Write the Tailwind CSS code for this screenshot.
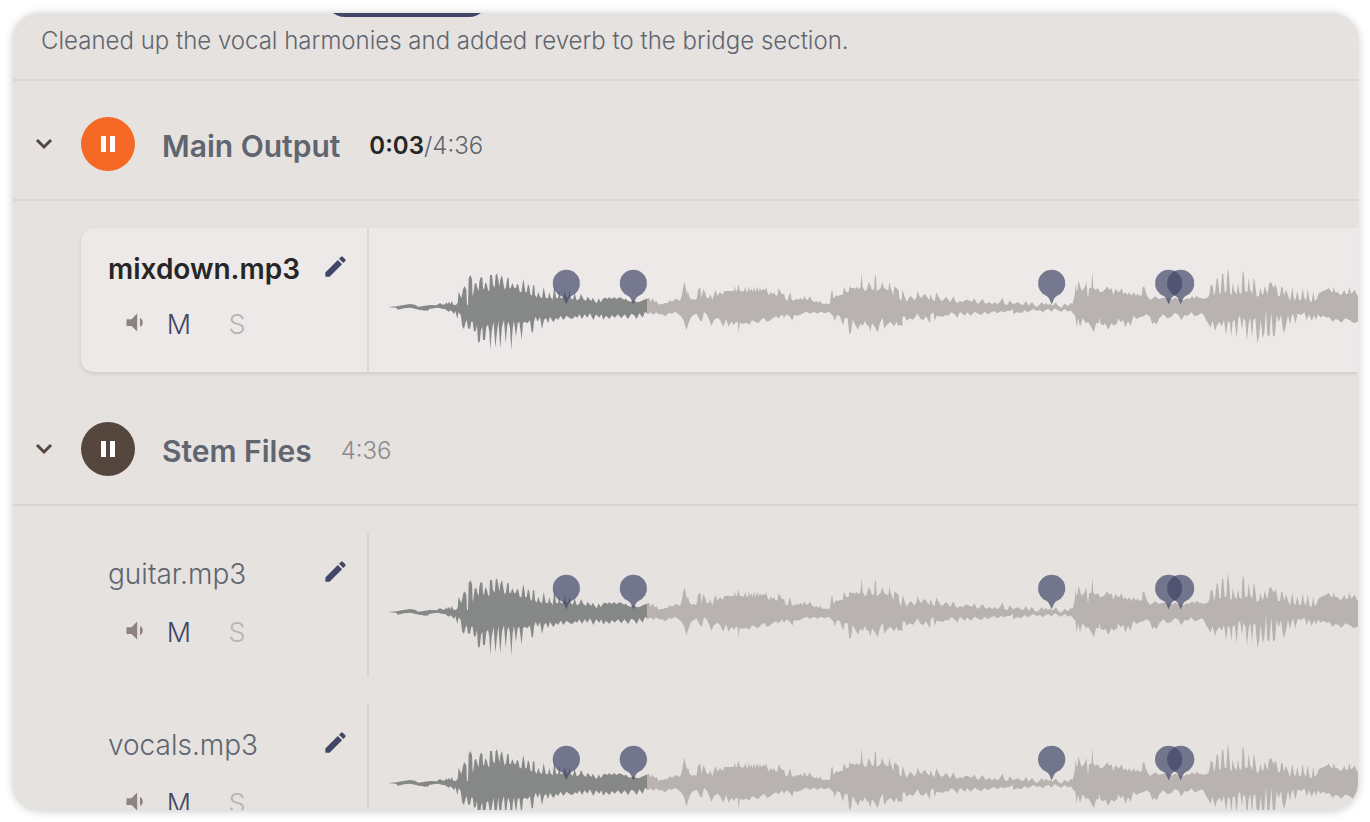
<!DOCTYPE html>
<html lang="en">
  <head>
    <meta charset="UTF-8" />
    <meta name="viewport" content="width=device-width, initial-scale=1" />
    <title>Stems player</title>
    <script src="https://cdn.jsdelivr.net/npm/@tailwindcss/browser@4"></script>
  </head>
  <body class="bg-white h-screen p-[13px] pr-3 pb-3 font-['Inter',sans-serif] font-light text-[#60656f]">
    <!-- shared shapes -->
    <svg class="absolute size-0" aria-hidden="true">
      <defs>
        <linearGradient id="progress" gradientUnits="userSpaceOnUse" x1="0" y1="0" x2="2934" y2="0">
          <stop offset="0.273" stop-color="#868888" />
          <stop offset="0.273" stop-color="#b8b3b0" />
        </linearGradient>
        <path id="wave" />
        <path id="pin" d="M0 44a41 41 0 0 1 14 79.500c-6 4-10 14-14 25c-4-11-8-21-14-25A41 41 0 0 1 0 44z" fill="#3e4567" fill-opacity="0.69" />
      </defs>
    </svg>

    <main class="h-full overflow-hidden rounded-[27px] bg-[#e5e2df] shadow-[0_1px_10px_rgba(0,0,0,0.22)]">
      <div class="border-b-2 border-[#d9d6d3] pb-[22px]">
        <button class="-mt-9 ml-[312px] block h-10 w-[164px] rounded-full bg-[#404667]" aria-label="Version"></button>
        <p class="pl-7 pt-2 text-2xl leading-8">Cleaned up the vocal harmonies and added reverb to the bridge section.</p>
      </div>

      <!-- main output -->
      <section>
        <header class="flex items-center border-b-2 border-[#d9d6d3] pt-9 pb-7 pl-[17px]">
          <button class="flex size-[27px] items-center justify-center" aria-label="Collapse Main Output">
            <svg class="size-[18px]" viewBox="0 0 18 18" fill="none" stroke="#54463d" stroke-width="3"><path d="M2 5l7 7 7-7" /></svg>
          </button>
          <button class="ml-6 flex size-[54px] items-center justify-center rounded-full bg-[#f66826]" aria-label="Pause Main Output">
            <svg class="h-4 w-[14px]" viewBox="0 0 14 16" fill="#fff"><path d="M0 0h5v16H0zM9 0h5v16H9z" /></svg>
          </button>
          <h2 class="ml-[27px] pt-1 text-[30px] leading-9 font-semibold">Main Output</h2>
          <p class="ml-[29px] pt-1 text-2xl leading-8"><span class="font-semibold text-[#262626]">0:03</span>/4:36</p>
        </header>
        <ul id="mainTracks" class="flex flex-col gap-[27px] pt-[27px] pb-[14px] pl-[68px]"></ul>
      </section>

      <!-- stems -->
      <section>
        <header class="flex items-center border-b-2 border-[#d9d6d3] pt-9 pb-7 pl-[17px]">
          <button class="flex size-[27px] items-center justify-center" aria-label="Collapse Stem Files">
            <svg class="size-[18px]" viewBox="0 0 18 18" fill="none" stroke="#54463d" stroke-width="3"><path d="M2 5l7 7 7-7" /></svg>
          </button>
          <button class="ml-6 flex size-[54px] items-center justify-center rounded-full bg-[#54463d]" aria-label="Pause Stem Files">
            <svg class="h-4 w-[14px]" viewBox="0 0 14 16" fill="#fff"><path d="M0 0h5v16H0zM9 0h5v16H9z" /></svg>
          </button>
          <h2 class="ml-[27px] pt-1 text-[30px] leading-9 font-semibold">Stem Files</h2>
          <p class="ml-[29px] pt-1 text-2xl leading-8 text-[#8b8b8d]">4:36</p>
        </header>
        <ul id="stemTracks" class="flex flex-col gap-[27px] pt-[27px] pb-[14px] pl-[68px]"></ul>
      </section>
    </main>

    <script>
      // peaks of the waveform: [x offset, points]
      const topPeaks = [
        [0, "28,156 50,154 70,150 90,147 105,149 115,155 130,153 150,150 170,151 180,144 188,149 195,148 200,142 203,148 207,140 212,148 215,137 220,149 228,150 233,143 236,110 241,122 244,130 250,100 254,94 259,104 261,150 264,150 266,70 271,60 276,72 278,125 281,110 284,86 289,84 292,98 296,108 298,80 302,66 307,68 309,98 312,105 316,82 320,88 325,108 328,105 330,60 336,60 339,90 344,98 347,60 351,55 355,75 358,95 361,72 366,60 370,85 374,104 378,95 382,68 386,70 388,98 392,100 397,84 403,100 408,98 411,86 415,90 419,110 424,112 427,90 430,72 433,90 436,112 440,112 444,86 448,95 451,118 456,122 459,90 463,92 465,120 470,128 475,110 480,125"],
        [480, "6,130 11,96 14,112 17,128 24,130 28,110 31,125 38,134 43,90 48,128 54,130 58,108 62,130 70,128 74,105 78,125 84,128 89,108 92,128 98,135 104,115 110,136 118,132 123,117 130,132 138,138 142,125 148,132 154,138 158,128 164,138 170,145 176,130 182,142 190,130 196,128 202,132 208,126 214,132 222,127 230,132 238,127 246,130 252,134 258,131 264,138 272,140 280,136 288,140 296,142 304,138 312,134 320,131 327,128 332,140 338,130 344,142 350,138 356,150 362,146 368,148 375,144 382,145 390,136 396,140 402,136 408,132 414,134 420,138 426,120 429,100 433,80 437,98 441,118 444,108 448,126 454,134 460,132 466,134 470,132 474,104 480,98"],
        [960, "1,100 5,130 10,102 15,112 20,128 26,130 31,118 37,136 42,118 47,105 52,122 60,112 66,118 70,118 72,108 98,108 102,108 104,92 108,110 112,104 115,88 119,106 126,110 132,108 136,95 139,110 144,108 146,94 150,110 154,100 158,112 162,95 166,112 172,96 176,112 180,98 184,108 190,102 196,105 199,96 202,112 208,122 212,108 216,118 222,112 226,120 232,122 236,100 242,110 246,118 252,116 256,132 262,138 268,118 271,112 275,134 280,137 290,132 296,134 302,128 308,136 314,122 318,134 324,134 329,124 336,136 344,142 350,138 356,145 360,136 364,144 372,148 378,145 384,148 390,145 394,110 397,106 400,130 404,128 408,120 414,124 420,120 428,120 432,95 437,108 442,112 446,110 449,92 453,100 460,98 464,102 470,96 476,102"],
        [1440, "1,98 3,80 5,52 8,95 14,108 20,105 26,82 30,88 36,105 42,102 45,60 48,64 50,108 56,104 62,98 67,80 72,98 80,104 85,106 88,80 92,98 100,120 103,94 110,100 116,106 118,130 124,138 128,104 134,125 140,140 146,130 152,122 158,130 164,136 170,125 172,108 178,122 184,130 190,120 196,118 202,128 208,134 212,118 218,134 224,138 229,112 234,122 238,128 243,138 250,135 258,126 264,132 270,142 276,132 280,124 286,138 292,144 300,138 308,142 314,136 322,134 330,138 336,140 343,130 350,144 356,146 362,138 368,132 374,144 380,146 388,140 396,148 404,142 412,148 420,140 428,128 434,148 442,150 450,136 458,148 466,145 474,142 482,148 490,150 498,138 506,152"],
        [1950, "6,140 14,152 20,155 26,152 32,145 36,142 42,150 48,143 54,150 60,146 66,152 72,148 78,142 84,152 94,158 104,146 114,154 122,144 128,146 134,120 137,86 140,110 143,100 145,76 150,92 155,108 160,102 165,95 168,80 171,98 173,125 175,125 177,100 184,98 187,50 190,98 196,104 204,100 210,112 218,110 226,102 232,94 238,104 245,100 250,120 256,102 262,108 268,112 275,100 280,118 286,112 292,120 298,112 304,122 312,112 318,124 322,115 328,122 336,120 338,95 343,95 347,112 353,125 360,135 368,130 376,124 386,132 394,130 402,128 415,130 425,134 435,128 450,134 462,136 470,130 478,132 486,124 494,130 500,122 506,128"],
        [2460, "6,130 14,132 18,128 24,128 28,118 32,90 38,92 42,122 46,108 50,70 54,72 58,115 62,116 66,55 70,58 74,110 79,110 83,38 87,62 91,120 95,118 98,84 103,108 110,118 114,84 118,112 124,118 128,46 132,58 135,108 142,112 146,68 150,102 157,118 161,68 165,84 170,125 177,122 181,98 186,118 190,118 194,92 198,104 202,118 208,84 214,82 218,94 222,98 225,88 230,98 234,124 240,122 244,94 248,98 252,122 258,104 263,118 270,138 277,98 282,130 286,136 292,108 297,134 303,135 308,98 312,125 318,138 323,102 329,138 335,142 340,108 344,138 350,132 356,115 362,112 370,108 378,105 386,98 392,108 398,112 401,96 406,112 414,112 420,120 426,118 433,104 438,118 444,116 448,96 453,116 458,112 464,104 470,118 474,124"],
      ];
      const bottomPeaks = [
        [0, "28,157 48,158 54,164 72,160 90,158 108,162 120,165 128,165 132,168 138,166 142,168 148,162 160,160 175,158 188,162 195,162 200,166 206,170 212,166 218,172 222,178 226,168 232,192 236,172 242,180 247,215 252,222 256,205 260,195 264,220 270,222 274,200 278,200 282,230 287,228 291,210 294,262 299,262 303,225 307,215 309,255 315,255 319,215 324,210 328,230 331,285 335,230 341,200 346,278 350,240 355,198 361,280 366,215 372,195 377,264 382,210 386,200 390,220 394,286 398,220 402,198 408,246 413,205 418,200 425,255 429,205 434,200 442,205 450,196 455,232 459,232 462,200 467,185 473,200 480,186"],
        [480, "6,222 12,195 18,188 24,205 30,185 40,202 48,188 54,195 62,182 70,195 80,182 90,190 97,192 105,184 112,188 118,178 126,192 134,178 142,188 150,175 160,195 168,178 178,188 184,178 190,194 198,182 208,192 216,180 224,188 234,178 244,190 254,178 264,192 274,176 282,180 290,192 298,175 308,188 315,170 324,178 332,172 340,180 348,172 356,178 366,178 376,184 386,174 396,176 406,170 416,178 424,185 432,198 439,226 446,204 452,188 460,180 470,176 478,192"],
        [960, "1,198 6,198 12,172 20,178 28,195 34,212 42,195 52,188 60,195 70,215 78,192 86,215 94,200 102,210 108,200 113,202 116,234 119,204 130,206 140,203 148,209 156,196 166,200 174,205 182,196 192,188 200,200 208,198 218,190 228,184 236,190 246,178 252,188 260,178 270,185 277,197 282,180 292,182 304,178 318,170 332,176 342,170 352,176 362,170 374,175 386,170 394,178 400,184 403,198 412,180 420,184 429,212 434,190 443,190 448,238 453,232 458,195 466,210 474,224"],
        [1440, "1,206 8,212 15,198 20,210 26,212 31,230 36,205 44,215 53,232 60,205 68,188 73,222 80,210 92,200 102,214 110,200 114,212 120,210 127,214 128,185 134,184 140,198 148,190 160,194 168,182 172,175 182,192 190,195 198,184 206,198 210,205 212,178 220,172 224,198 230,182 240,184 250,185 256,180 264,182 274,172 284,178 292,188 300,170 306,175 314,182 322,172 332,182 344,170 354,176 364,180 374,170 384,178 394,172 402,168 412,175 424,168 432,172 442,168 450,168 458,162 460,178 470,172 484,174 494,166 504,172"],
        [1950, "4,166 10,162 20,168 30,165 38,172 48,164 56,162 64,170 74,160 84,166 94,170 104,162 114,170 122,166 130,176 136,182 140,218 144,190 150,216 158,190 168,205 174,200 180,210 192,232 198,205 206,205 208,188 212,208 220,210 226,206 235,224 244,205 252,212 262,204 264,190 272,202 280,195 286,218 294,198 302,212 310,182 320,192 330,186 340,184 350,178 360,185 367,208 372,200 380,208 388,190 400,178 412,190 424,186 434,174 444,178 454,196 464,180 474,182 484,172 494,184 506,180"],
        [2460, "2,175 10,178 18,195 26,208 32,218 37,198 46,228 50,212 58,200 65,214 72,195 78,240 84,198 90,205 94,245 98,200 104,195 110,250 115,190 120,182 126,226 130,190 136,198 141,258 146,205 151,188 156,250 160,195 166,190 172,264 177,245 182,195 188,250 193,235 198,165 202,240 208,245 214,170 219,245 225,240 230,180 236,202 243,180 248,220 253,234 260,200 264,180 270,208 276,180 280,178 286,206 293,176 304,180 313,172 320,195 327,178 335,197 343,180 348,195 354,178 362,188 370,182 380,188 388,186 398,200 406,192 414,194 424,203 436,190 450,196 460,204 474,200"],
      ];

      // join the chunks in a list of [x, y]
      function toPoints(chunks) {
        return chunks.flatMap(([offset, points]) =>
          points.split(" ").map((p) => {
            const [x, y] = p.split(",").map(Number);
            return [x + offset, y];
          })
        );
      }

      const outline = [...toPoints(topPeaks), ...toPoints(bottomPeaks).reverse()];
      document.getElementById("wave").setAttribute("d", `M${outline.join("L")}Z`);

      const comments = [559, 760, 2015, 2366, 2402];

      function renderTrack(name, active) {
        return `
          <li class="flex h-36 ${active ? "rounded-l-[13px] bg-[#ede9e8] shadow-[0_2px_4px_rgba(0,0,0,0.1)]" : ""}">
            <div class="w-72 shrink-0 border-r-2 border-[#d9d6d3] pl-[27px] pt-[25px]">
              <div class="flex items-start justify-between pr-[18px]">
                <h3 class="text-[28px] leading-8 ${active ? "font-semibold text-[#262626]" : ""}">${name}</h3>
                <button aria-label="Rename ${name}">
                  <svg class="size-[27px]" viewBox="0 0 24 24" fill="#404667"><path d="M3 17.250V21h3.750L17.810 9.940l-3.750-3.750L3 17.250zM20.710 7.040a1 1 0 0 0 0-1.410l-2.340-2.340a1 1 0 0 0-1.410 0l-1.830 1.830 3.750 3.750 1.830-1.830z" /></svg>
                </button>
              </div>
              <div class="flex items-start pl-[14px] text-[27px] leading-8 ${active ? "mt-6" : "mt-[27px]"}">
                <button class="w-[27px]" aria-label="Volume of ${name}">
                  <svg class="size-[27px]" viewBox="0 0 24 24" fill="#8e8280"><path d="M18.500 12c0-1.770-1.020-3.290-2.500-4.030v8.050c1.480-.730 2.500-2.250 2.500-4.020zM4 9v6h4.500l5 5V4l-5 5H4z" /></svg>
                </button>
                <button class="ml-[14px] w-8 text-[#404667]" aria-label="Mute ${name}">M</button>
                <button class="ml-[26px] w-8 text-[#b8b4b2]" aria-label="Solo ${name}">S</button>
              </div>
            </div>
            <div class="min-w-0 flex-1 overflow-hidden pl-[11px] pt-[27px]">
              <svg class="h-[110px] w-[978px] max-w-none" viewBox="0 0 2934 330">
                <use href="#wave" fill="url(#progress)" />
                ${comments.map((x) => `<use href="#pin" x="${x}" />`).join("")}
              </svg>
            </div>
          </li>`;
      }

      document.getElementById("mainTracks").innerHTML = renderTrack("mixdown.mp3", true);
      document.getElementById("stemTracks").innerHTML = ["guitar.mp3", "vocals.mp3"]
        .map((name) => renderTrack(name, false))
        .join("");
    </script>
  </body>
</html>
